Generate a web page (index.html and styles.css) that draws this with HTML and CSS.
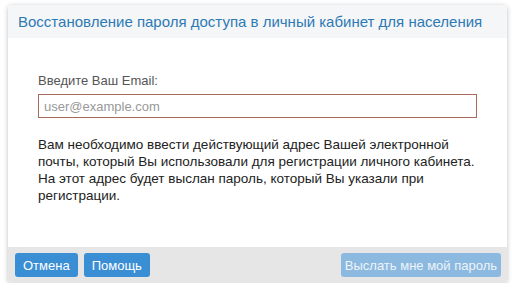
FILE: index.html
```html
<!DOCTYPE html>
<html lang="ru">
<head>
    <meta charset="UTF-8">
    <title>Восстановление пароля</title>
    <link rel="stylesheet" href="styles.css">
</head>
<body>
    <div class="dialog">
        <div class="dialog-header">
            <h2>Восстановление пароля доступа в личный кабинет для населения</h2>
        </div>
        <div class="dialog-body">
            <label for="email">Введите Ваш Email:</label>
            <input type="text" id="email" placeholder="user@example.com">
            <p class="hint">Вам необходимо ввести действующий адрес Вашей электронной почты, который Вы использовали для регистрации личного кабинета. На этот адрес будет выслан пароль, который Вы указали при регистрации.</p>
        </div>
        <div class="dialog-footer">
            <div class="left-buttons">
                <button class="btn">Отмена</button>
                <button class="btn">Помощь</button>
            </div>
            <button class="btn btn-send" disabled>Выслать мне мой пароль</button>
        </div>
    </div>
</body>
</html>
```

FILE: styles.css
```css
html {
    background: #fff;
    font-family: "Liberation Sans", Arial, sans-serif;
}
body {
    margin: 0;
    padding: 5px 0 0 8px;
}
.dialog {
    width: 499px;
    background: #fff;
    border-radius: 4px;
    box-shadow: 0 1px 5px rgba(0, 0, 0, 0.25);
    overflow: hidden;
}
.dialog-header {
    height: 33px;
    display: flex;
    align-items: center;
    padding: 0 10px;
    background: #f5f6f7;
}
.dialog-header h2 {
    margin: 0;
    font-size: 15px;
    font-weight: normal;
    color: #2d7ab5;
}
.dialog-body {
    padding: 35px 30px 0 30px;
    height: 174px;
}
.dialog-body label {
    display: block;
    font-size: 13px;
    color: #555;
    margin-bottom: 6px;
}
.dialog-body input {
    display: block;
    width: 100%;
    box-sizing: border-box;
    height: 24px;
    padding: 0 5px;
    border: 1px solid #a86a5c;
    font-family: inherit;
    font-size: 13px;
    color: #333;
    outline: none;
}
.dialog-body input::placeholder {
    color: #999;
}
.hint {
    margin: 18px 0 0 0;
    font-size: 13.5px;
    line-height: 17px;
    color: #222;
}
.dialog-footer {
    height: 36px;
    display: flex;
    align-items: center;
    justify-content: space-between;
    padding: 0 6px 0 7px;
    background: #e6e6e6;
}
.left-buttons {
    display: flex;
    gap: 6px;
}
.btn {
    height: 24px;
    padding: 0 8px;
    border: none;
    border-radius: 3px;
    background: #3a8ed4;
    color: #fff;
    font-family: inherit;
    font-size: 13px;
    cursor: pointer;
}
.btn-send {
    padding: 0 4px;
}
.btn:disabled {
    background: #8cb9df;
    color: #eef4fa;
    cursor: default;
}
```
